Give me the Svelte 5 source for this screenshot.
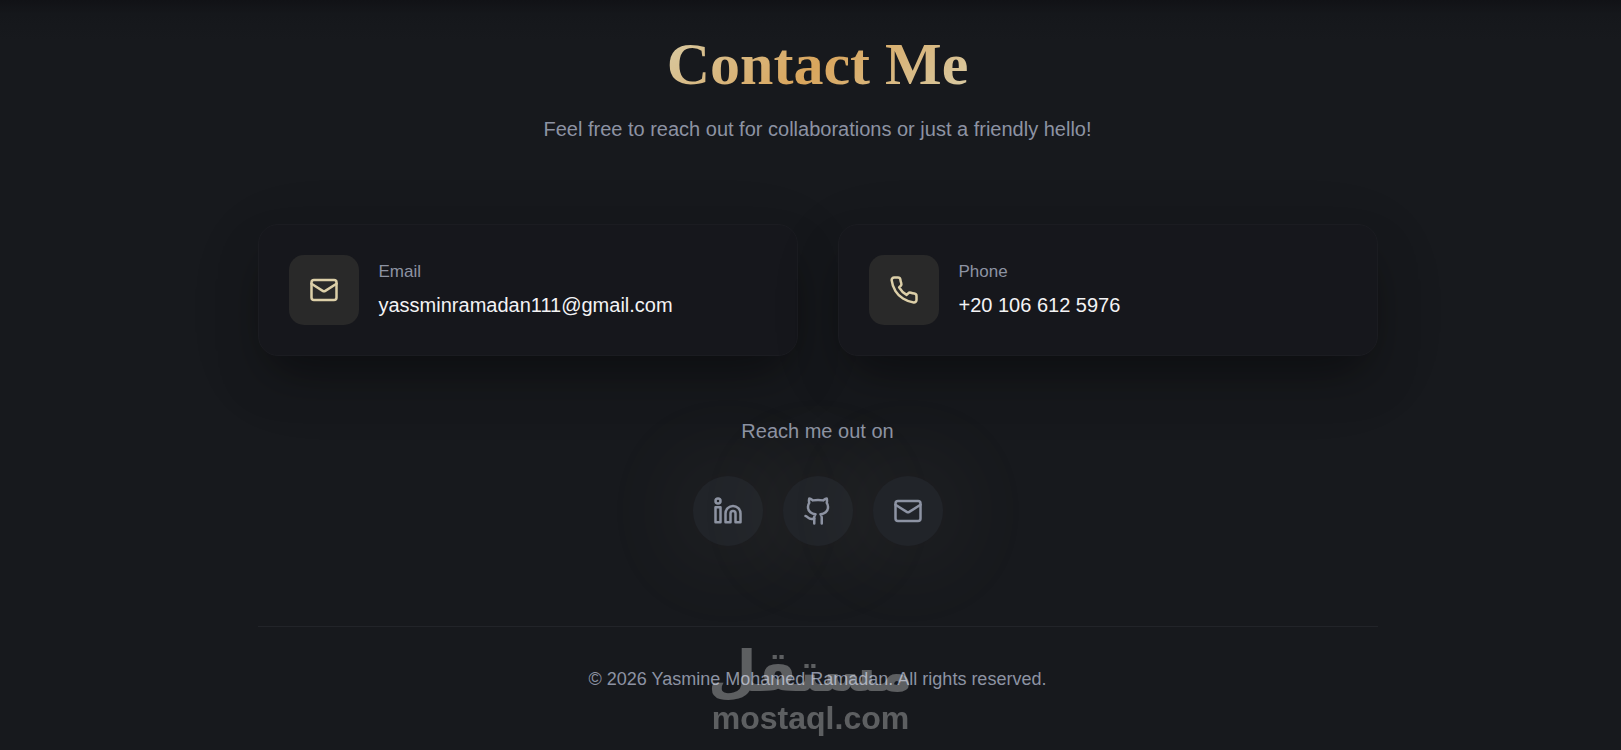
<script>
  const contacts = [
    { icon: 'mail', label: 'Email', value: 'yassminramadan111@gmail.com', href: 'mailto:yassminramadan111@gmail.com' },
    { icon: 'phone', label: 'Phone', value: '+20 106 612 5976', href: 'tel:+201066125976' },
  ];

  const socials = [
    { icon: 'linkedin', label: 'LinkedIn', href: '#linkedin' },
    { icon: 'github', label: 'GitHub', href: '#github' },
    { icon: 'mail', label: 'Email', href: 'mailto:yassminramadan111@gmail.com' },
  ];
</script>

{#snippet icon(name)}
  <svg class="icon" viewBox="0 0 24 24" aria-hidden="true">
    {#if name === 'mail'}
      <rect x="2" y="4" width="20" height="16" rx="2" />
      <path d="m22 7-8.97 5.7a1.94 1.94 0 0 1-2.06 0L2 7" />
    {:else if name === 'phone'}
      <path d="M22 16.92v3a2 2 0 0 1-2.18 2 19.79 19.79 0 0 1-8.63-3.07 19.5 19.5 0 0 1-6-6 19.79 19.79 0 0 1-3.07-8.67A2 2 0 0 1 4.11 2h3a2 2 0 0 1 2 1.72 12.84 12.84 0 0 0 .7 2.81 2 2 0 0 1-.45 2.11L8.09 9.91a16 16 0 0 0 6 6l1.27-1.27a2 2 0 0 1 2.11-.45 12.84 12.84 0 0 0 2.81.7A2 2 0 0 1 22 16.92z" />
    {:else if name === 'linkedin'}
      <path d="M16 8a6 6 0 0 1 6 6v7h-4v-7a2 2 0 0 0-2-2 2 2 0 0 0-2 2v7h-4v-7a6 6 0 0 1 6-6z" />
      <rect x="2" y="9" width="4" height="12" />
      <circle cx="4" cy="4" r="2" />
    {:else if name === 'github'}
      <path d="M15 22v-4a4.8 4.8 0 0 0-1-3.5c3 0 6-2 6-5.5.08-1.25-.27-2.48-1-3.5.28-1.15.28-2.35 0-3.5 0 0-1 0-3 1.5-2.64-.5-5.36-.5-8 0C6 2 5 2 5 2c-.3 1.15-.3 2.35 0 3.5A5.403 5.403 0 0 0 4 9c0 3.5 3 5.5 6 5.5-.39.49-.68 1.05-.85 1.65-.17.6-.22 1.23-.15 1.85v4" />
      <path d="M9 18c-4.51 2-5-2-7-2" />
    {/if}
  </svg>
{/snippet}

<main class="page">
  <section class="contact">
    <h1>Contact Me</h1>
    <p class="lead">Feel free to reach out for collaborations or just a friendly hello!</p>

    <div class="cards">
      {#each contacts as item}
        <a class="card" href={item.href}>
          <span class="card-icon">{@render icon(item.icon)}</span>
          <span class="card-text">
            <span class="card-label">{item.label}</span>
            <span class="card-value">{item.value}</span>
          </span>
        </a>
      {/each}
    </div>

    <p class="reach">Reach me out on</p>
    <nav class="socials">
      {#each socials as item}
        <a class="social" href={item.href} aria-label={item.label}>{@render icon(item.icon)}</a>
      {/each}
    </nav>

    <footer>
      <p>© 2026 Yasmine Mohamed Ramadan. All rights reserved.</p>
    </footer>
  </section>

  <div class="watermark">
    <span class="mark-ar" lang="ar" dir="rtl">مستقل</span>
    <span class="mark-en">mostaql.com</span>
  </div>
</main>

<style>
  :global(body) {
    margin: 0;
    background: #17191d;
  }

  .page {
    position: relative;
    box-sizing: border-box;
    min-height: 100vh;
    padding: 32px 0 0 14px;
    overflow: hidden;
    background: linear-gradient(#111216, #15171b 14px, #17191d 40px);
    color: #8d93a3;
    font-family: "Liberation Sans", Arial, sans-serif;
    font-size: 20px;
    line-height: 28px;
  }

  .contact {
    max-width: 1120px;
    margin: 0 auto;
    text-align: center;
  }

  h1 {
    width: fit-content;
    margin: 0 auto;
    font-family: "Liberation Serif", "Times New Roman", serif;
    font-size: 60px;
    font-weight: 700;
    line-height: 64px;
    color: transparent;
    background: linear-gradient(135deg, #d8cba5, #d9a55c 50%, #d8cba5);
    background-clip: text;
  }

  p {
    margin: 0;
  }

  .lead {
    margin-top: 19px;
  }

  .cards {
    display: grid;
    grid-template-columns: 1fr 1fr;
    gap: 40px;
    margin-top: 81px;
    text-align: left;
  }

  .card {
    display: flex;
    align-items: center;
    gap: 20px;
    padding: 30px;
    border: 1px solid #1b1c21;
    border-radius: 20px;
    background: #16171c;
    box-shadow:
      0 25px 50px -12px rgba(0, 0, 0, 0.42),
      0 20px 75px rgba(0, 0, 0, 0.1);
    color: inherit;
    text-decoration: none;
  }

  .card-icon {
    display: grid;
    place-items: center;
    width: 70px;
    height: 70px;
    border-radius: 15px;
    background: #292929;
    color: #dccfa8;
  }

  .card-text {
    display: flex;
    flex-direction: column;
    gap: 5px;
    padding-bottom: 4px;
  }

  .card-label {
    font-size: 17px;
  }

  .card-value {
    color: #f3f3f5;
  }

  .icon {
    display: block;
    width: 30px;
    height: 30px;
    fill: none;
    stroke: currentColor;
    stroke-width: 2;
    stroke-linecap: round;
    stroke-linejoin: round;
  }

  .reach {
    margin-top: 61px;
  }

  .socials {
    display: flex;
    justify-content: center;
    gap: 20px;
    margin-top: 31px;
  }

  .social {
    display: grid;
    place-items: center;
    width: 70px;
    height: 70px;
    border-radius: 50%;
    background: #212429;
    box-shadow: 0 0 100px 12px rgba(220, 207, 168, 0.08);
    color: #8d93a3;
  }

  footer {
    margin-top: 80px;
    padding: 38px 0;
    border-top: 1px solid #222429;
    font-size: 18px;
  }

  /* site mark laid over the footer */
  .watermark {
    position: absolute;
    bottom: 14px;
    left: 0;
    right: 0;
    display: flex;
    flex-direction: column;
    align-items: center;
    color: #fff;
    font-weight: 700;
    opacity: 0.3;
    pointer-events: none;
  }

  .mark-ar {
    font-family: "DejaVu Sans", sans-serif;
    font-size: 56px;
    line-height: 56px;
  }

  .mark-en {
    font-size: 32px;
    line-height: 36px;
  }
</style>
